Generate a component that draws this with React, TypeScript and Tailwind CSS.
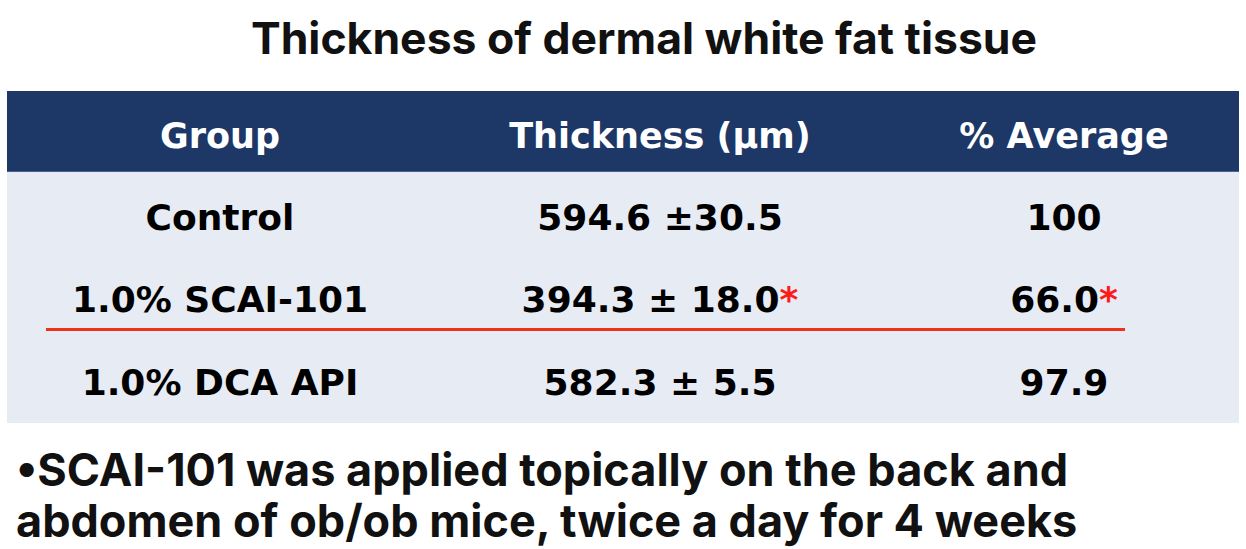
const rows = [
  { group: 'Control', thick: '594.6 ±30.5', star: false, avg: '100' },
  { group: '1.0% SCAI-101', thick: '394.3 ± 18.0', star: true, avg: '66.0' },
  { group: '1.0% DCA API', thick: '582.3 ± 5.5', star: false, avg: '97.9' },
];

function Cell({ children }: { children: React.ReactNode }) {
  return <div className="flex items-center justify-center whitespace-nowrap">{children}</div>;
}

export default function App() {
  return (
    <div className="w-[1246px] h-[549px] bg-white overflow-hidden">
      <h1 className="pt-[11px] text-center font-['Inter',sans-serif] font-bold text-[44.5px] leading-[54px] text-[#111111] ml-[42px] whitespace-nowrap">
        Thickness of dermal white fat tissue
      </h1>

      <div className="mt-[26px] mx-[7px] font-['DejaVu_Sans',sans-serif] font-bold">
        <div className="grid grid-cols-[426px_454px_354px] h-[81px] bg-[#1d3766] text-white text-[35px] leading-[40px] pt-[10px] border-b border-[#4a6290]">
          <Cell>Group</Cell>
          <Cell>Thickness (µm)</Cell>
          <Cell>% Average</Cell>
        </div>

        <div className="bg-[#e7ebf4] text-black text-[36px] leading-[40px] h-[251px]">
          <div className="grid grid-cols-[426px_454px_354px] pt-[26px]">
            <Cell>{rows[0].group}</Cell>
            <Cell>{rows[0].thick}</Cell>
            <Cell>{rows[0].avg}</Cell>
          </div>
          <div className="grid grid-cols-[426px_454px_354px] pt-[42px]">
            <Cell>{rows[1].group}</Cell>
            <Cell>
              {rows[1].thick}
              <span className="text-[#ff1a1a] self-start">*</span>
            </Cell>
            <Cell>
              {rows[1].avg}
              <span className="text-[#ff1a1a] self-start">*</span>
            </Cell>
          </div>
          <div className="ml-[39px] w-[1079px] h-[3px] mt-[8px] bg-[#ee3218]" />
          <div className="grid grid-cols-[426px_454px_354px] pt-[32px]">
            <Cell>{rows[2].group}</Cell>
            <Cell>{rows[2].thick}</Cell>
            <Cell>{rows[2].avg}</Cell>
          </div>
        </div>
      </div>

      <p className="mt-[21px] ml-[16px] font-['Inter',sans-serif] font-bold text-[45px] leading-[51px] text-[#111111] whitespace-nowrap">
        •SCAI-101 was applied topically on the back and
        <br />
        abdomen of ob/ob mice, twice a day for 4 weeks
      </p>
    </div>
  );
}
